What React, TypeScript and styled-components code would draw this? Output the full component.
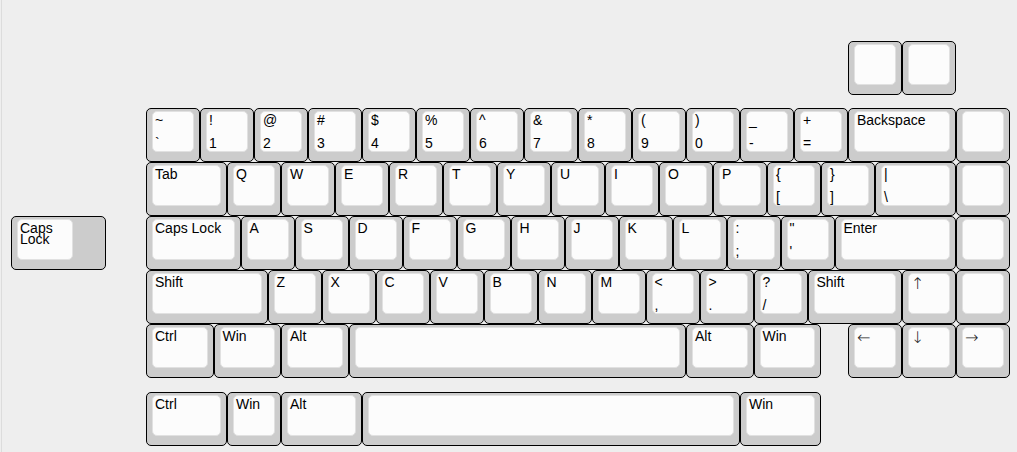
import React from 'react'
import styled, { createGlobalStyle } from 'styled-components'

const UNIT = 54

const GlobalStyle = createGlobalStyle`
  html, body {
    margin: 0;
    padding: 0;
    background: #eeeeee;
  }
  body {
    font-family: "Liberation Sans", Arial, sans-serif;
  }
`

const Canvas = styled.div`
  margin-left: 1px;
  border-left: 1px solid #dcdcdc;
  height: 452px;
  box-sizing: border-box;
  padding: 41px 0 0 9px;
  overflow: hidden;
`

const Board = styled.div`
  display: flex;
  flex-direction: column;
`

const Row = styled.div<{ $gapTop?: number }>`
  display: flex;
  margin-top: ${p => p.$gapTop ?? 0}px;
`

const Spacer = styled.div<{ $w: number }>`
  flex: 0 0 ${p => p.$w * UNIT}px;
`

const KeyBody = styled.div<{ $w: number }>`
  flex: 0 0 ${p => p.$w * UNIT}px;
  width: ${p => p.$w * UNIT}px;
  height: ${UNIT}px;
  box-sizing: border-box;
  border: 1px solid #000;
  border-radius: 5px;
  background: #cccccc;
  padding: 2px 5px 9px 5px;
`

const KeyTop = styled.div<{ $w?: number }>`
  box-sizing: border-box;
  height: 100%;
  width: ${p => (p.$w ? `${p.$w * UNIT - 12}px` : '100%')};
  background: #fcfcfc;
  border: 1px solid #e1e1e1;
  border-radius: 5px;
  display: flex;
  flex-direction: column;
  justify-content: space-between;
  overflow: hidden;
`

const Legend = styled.div<{ $tight?: boolean; $symbol?: boolean }>`
  font-size: 14px;
  line-height: ${p => (p.$tight ? '11px' : '16px')};
  padding: ${p => (p.$tight ? '3px 2px 0' : '0 2px')};
  color: #000;
  white-space: pre;

  ${p =>
    p.$symbol &&
    `
    font-family: "DejaVu Sans", sans-serif;
    font-size: 16px;
    font-weight: 200;
    line-height: 18px;
    padding: 1px 2px 0;
    color: #222;
  `}
`

type KeyDef = {
  w?: number
  top?: string
  bottom?: string
  step?: number
  tight?: boolean
  symbol?: boolean
}

const Key = ({ w = 1, top, bottom, step, tight, symbol }: KeyDef) => (
  <KeyBody $w={w}>
    <KeyTop $w={step}>
      <Legend $tight={tight} $symbol={symbol}>{top ?? ''}</Legend>
      {bottom && <Legend>{bottom}</Legend>}
    </KeyTop>
  </KeyBody>
)

const k = (top: string, bottom?: string, w = 1): KeyDef => ({ top, bottom, w })
const arrow = (top: string): KeyDef => ({ top, symbol: true })

const numberRow: KeyDef[] = [
  k('~', '`'), k('!', '1'), k('@', '2'), k('#', '3'), k('$', '4'), k('%', '5'),
  k('^', '6'), k('&', '7'), k('*', '8'), k('(', '9'), k(')', '0'), k('_', '-'),
  k('+', '='), k('Backspace', undefined, 2), k(''),
]

const tabRow: KeyDef[] = [
  k('Tab', undefined, 1.5),
  ...'QWERTYUIOP'.split('').map(c => k(c)),
  k('{', '['), k('}', ']'), k('|', '\\', 1.5), k(''),
]

const homeRow: KeyDef[] = [
  k('Caps Lock', undefined, 1.75),
  ...'ASDFGHJKL'.split('').map(c => k(c)),
  k(':', ';'), k('"', "'"), k('Enter', undefined, 2.25), k(''),
]

const shiftRow: KeyDef[] = [
  k('Shift', undefined, 2.25),
  ...'ZXCVBNM'.split('').map(c => k(c)),
  k('<', ','), k('>', '.'), k('?', '/'), k('Shift', undefined, 1.75), arrow('↑'), k(''),
]

const bottomRow: KeyDef[] = [
  k('Ctrl', undefined, 1.25), k('Win', undefined, 1.25), k('Alt', undefined, 1.25),
  k('', undefined, 6.25), k('Alt', undefined, 1.25), k('Win', undefined, 1.25),
]

const arrows: KeyDef[] = [arrow('←'), arrow('↓'), arrow('→')]

const altBottomRow: KeyDef[] = [
  k('Ctrl', undefined, 1.5), k('Win'), k('Alt', undefined, 1.5),
  k('', undefined, 7), k('Win', undefined, 1.5),
]

const renderKeys = (keys: KeyDef[]) => keys.map((key, i) => <Key key={i} {...key} />)

export default function App() {
  return (
    <>
      <GlobalStyle />
      <Canvas>
        <Board>
          <Row>
            <Spacer $w={15.5} />
            <Key />
            <Key />
          </Row>
          <Row $gapTop={13}>
            <Spacer $w={2.5} />
            {renderKeys(numberRow)}
          </Row>
          <Row>
            <Spacer $w={2.5} />
            {renderKeys(tabRow)}
          </Row>
          <Row>
            <Key w={1.75} step={1.25} top={'Caps\nLock'} tight />
            <Spacer $w={0.75} />
            {renderKeys(homeRow)}
          </Row>
          <Row>
            <Spacer $w={2.5} />
            {renderKeys(shiftRow)}
          </Row>
          <Row>
            <Spacer $w={2.5} />
            {renderKeys(bottomRow)}
            <Spacer $w={0.5} />
            {renderKeys(arrows)}
          </Row>
          <Row $gapTop={14}>
            <Spacer $w={2.5} />
            {renderKeys(altBottomRow)}
          </Row>
        </Board>
      </Canvas>
    </>
  )
}
